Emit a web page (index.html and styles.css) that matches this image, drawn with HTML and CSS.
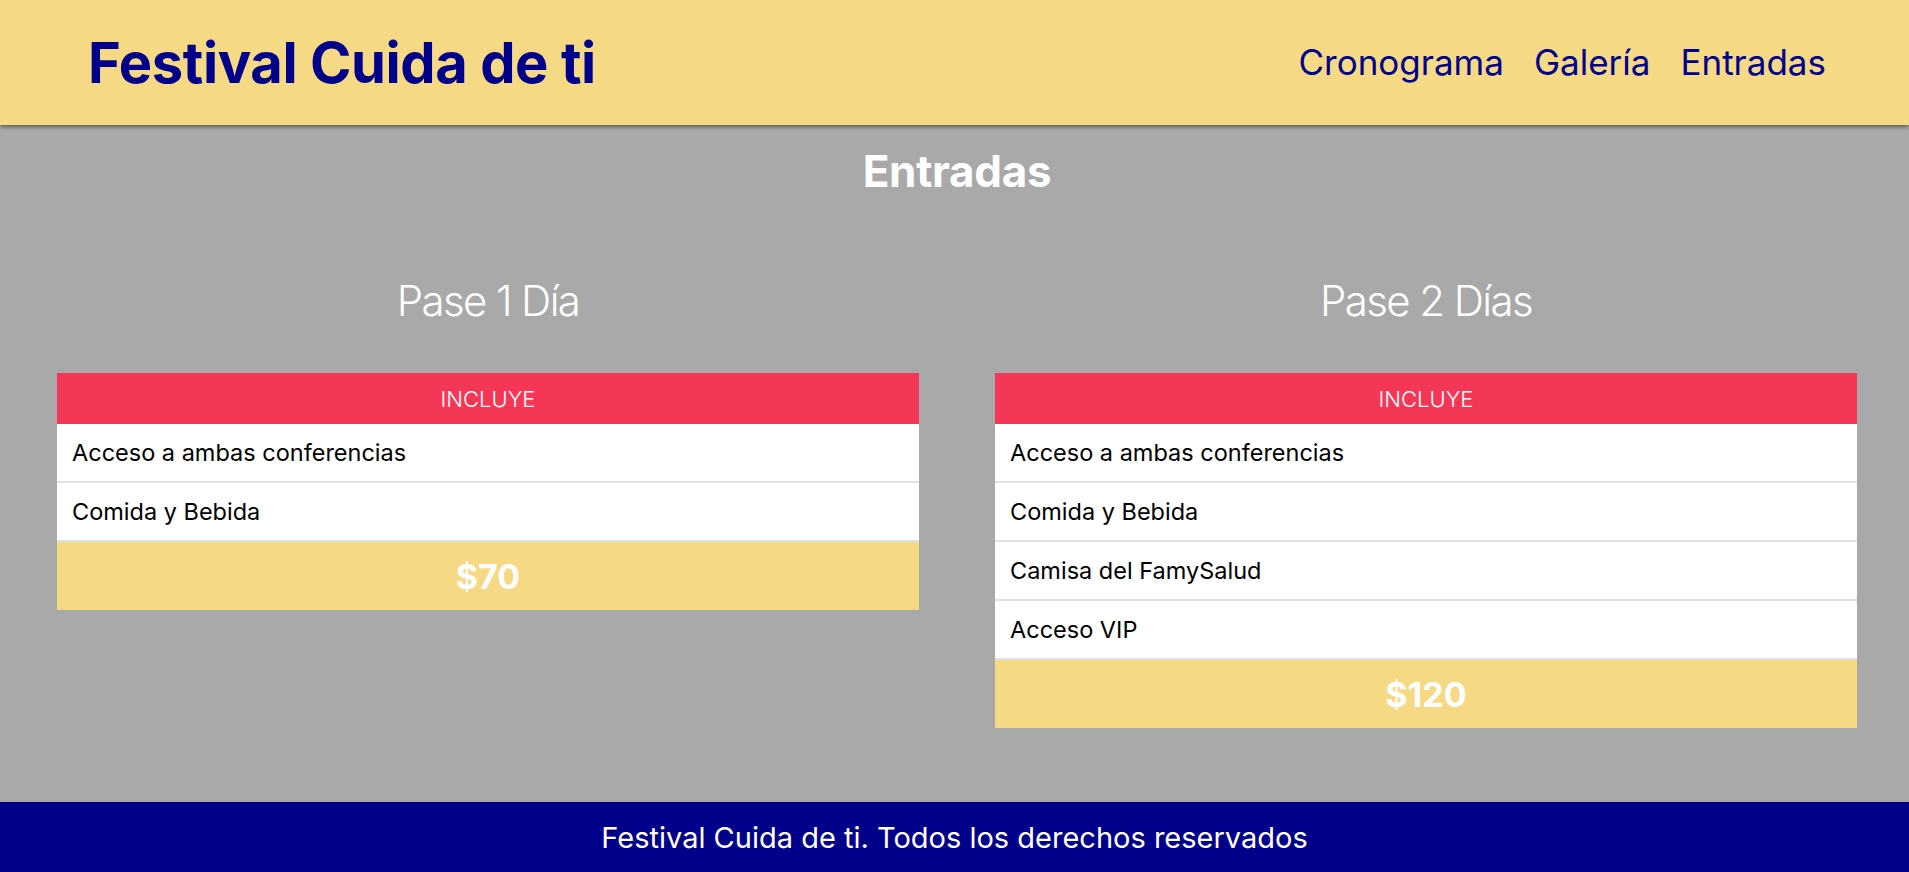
FILE: index.html
```html
<!DOCTYPE html>
<html lang="es">
<head>
<meta charset="utf-8">
<title>Festival Cuida de ti</title>
<link rel="stylesheet" href="styles.css">
</head>
<body>
<header class="site-header">
  <h1 class="logo">Festival Cuida de ti</h1>
  <nav class="nav">
    <a href="#" class="nav-link">Cronograma</a>
    <a href="#" class="nav-link">Galería</a>
    <a href="#" class="nav-link">Entradas</a>
  </nav>
</header>
<main class="main">
  <h2 class="section-title">Entradas</h2>
  <div class="passes">
    <section class="pass">
      <h3 class="pass-title">Pase 1 Día</h3>
      <div class="card">
        <div class="card-head">INCLUYE</div>
        <ul class="card-list">
          <li class="card-item">Acceso a ambas conferencias</li>
          <li class="card-item">Comida y Bebida</li>
        </ul>
        <div class="card-price">$70</div>
      </div>
    </section>
    <section class="pass">
      <h3 class="pass-title">Pase 2 Días</h3>
      <div class="card">
        <div class="card-head">INCLUYE</div>
        <ul class="card-list">
          <li class="card-item">Acceso a ambas conferencias</li>
          <li class="card-item">Comida y Bebida</li>
          <li class="card-item">Camisa del FamySalud</li>
          <li class="card-item">Acceso VIP</li>
        </ul>
        <div class="card-price">$120</div>
      </div>
    </section>
  </div>
</main>
<footer class="site-footer">
  <p class="footer-text">Festival Cuida de ti. Todos los derechos reservados</p>
</footer>
</body>
</html>
```

FILE: styles.css
```css
* { box-sizing: border-box; }
html, body { margin: 0; padding: 0; }
body {
  font-family: Inter, "Noto Sans", sans-serif;
  background: #a9a9a9;
  min-height: 872px;
  display: flex;
  flex-direction: column;
}
.site-header {
  position: relative;
  z-index: 2;
  height: 125px;
  background: #f5d984;
  display: flex;
  align-items: center;
  justify-content: space-between;
  padding: 0 83px 0 88px;
  box-shadow: 0 2px 4px rgba(0,0,0,0.45);
}
.logo {
  margin: 0;
  font-size: 56px;
  line-height: 1;
  font-weight: 700;
  letter-spacing: -0.4px;
  color: #00008b;
}
.nav { display: flex; gap: 30px; }
.nav-link {
  font-size: 35px;
  line-height: 1;
  color: #00008b;
  text-decoration: none;
}
.main {
  flex: 1;
  padding: 24px 52px 0 57px;
}
.section-title {
  margin: 0;
  text-align: center;
  color: #fff;
  font-size: 44px;
  line-height: 44px;
  font-weight: 700;
  letter-spacing: -0.3px;
}
.passes {
  display: grid;
  grid-template-columns: 1fr 1fr;
  column-gap: 76px;
  align-items: start;
  margin-top: 85px;
}
.pass-title {
  margin: 0 0 49px;
  text-align: center;
  color: #fff;
  font-size: 42px;
  line-height: 46px;
  font-weight: 300;
  letter-spacing: -1.6px;
}
.card { background: #fff; }
.card-head {
  height: 51px;
  background: #f43757;
  color: #fff;
  font-size: 22px;
  font-weight: 300;
  display: flex;
  align-items: center;
  justify-content: center;
}
.card-list { list-style: none; margin: 0; padding: 0; }
.card-item {
  height: 59px;
  display: flex;
  align-items: center;
  padding: 0 15px;
  font-size: 23.5px;
  color: #000;
  border-bottom: 2px solid #e1e1e1;
}
.card-price {
  height: 68px;
  background: #f5d984;
  color: #fff;
  font-size: 34px;
  font-weight: 700;
  display: flex;
  align-items: center;
  justify-content: center;
}
.site-footer {
  height: 70px;
  background: #00008b;
  display: flex;
  align-items: center;
  justify-content: center;
}
.footer-text {
  margin: 0;
  color: #fff;
  font-size: 29px;
}
```
